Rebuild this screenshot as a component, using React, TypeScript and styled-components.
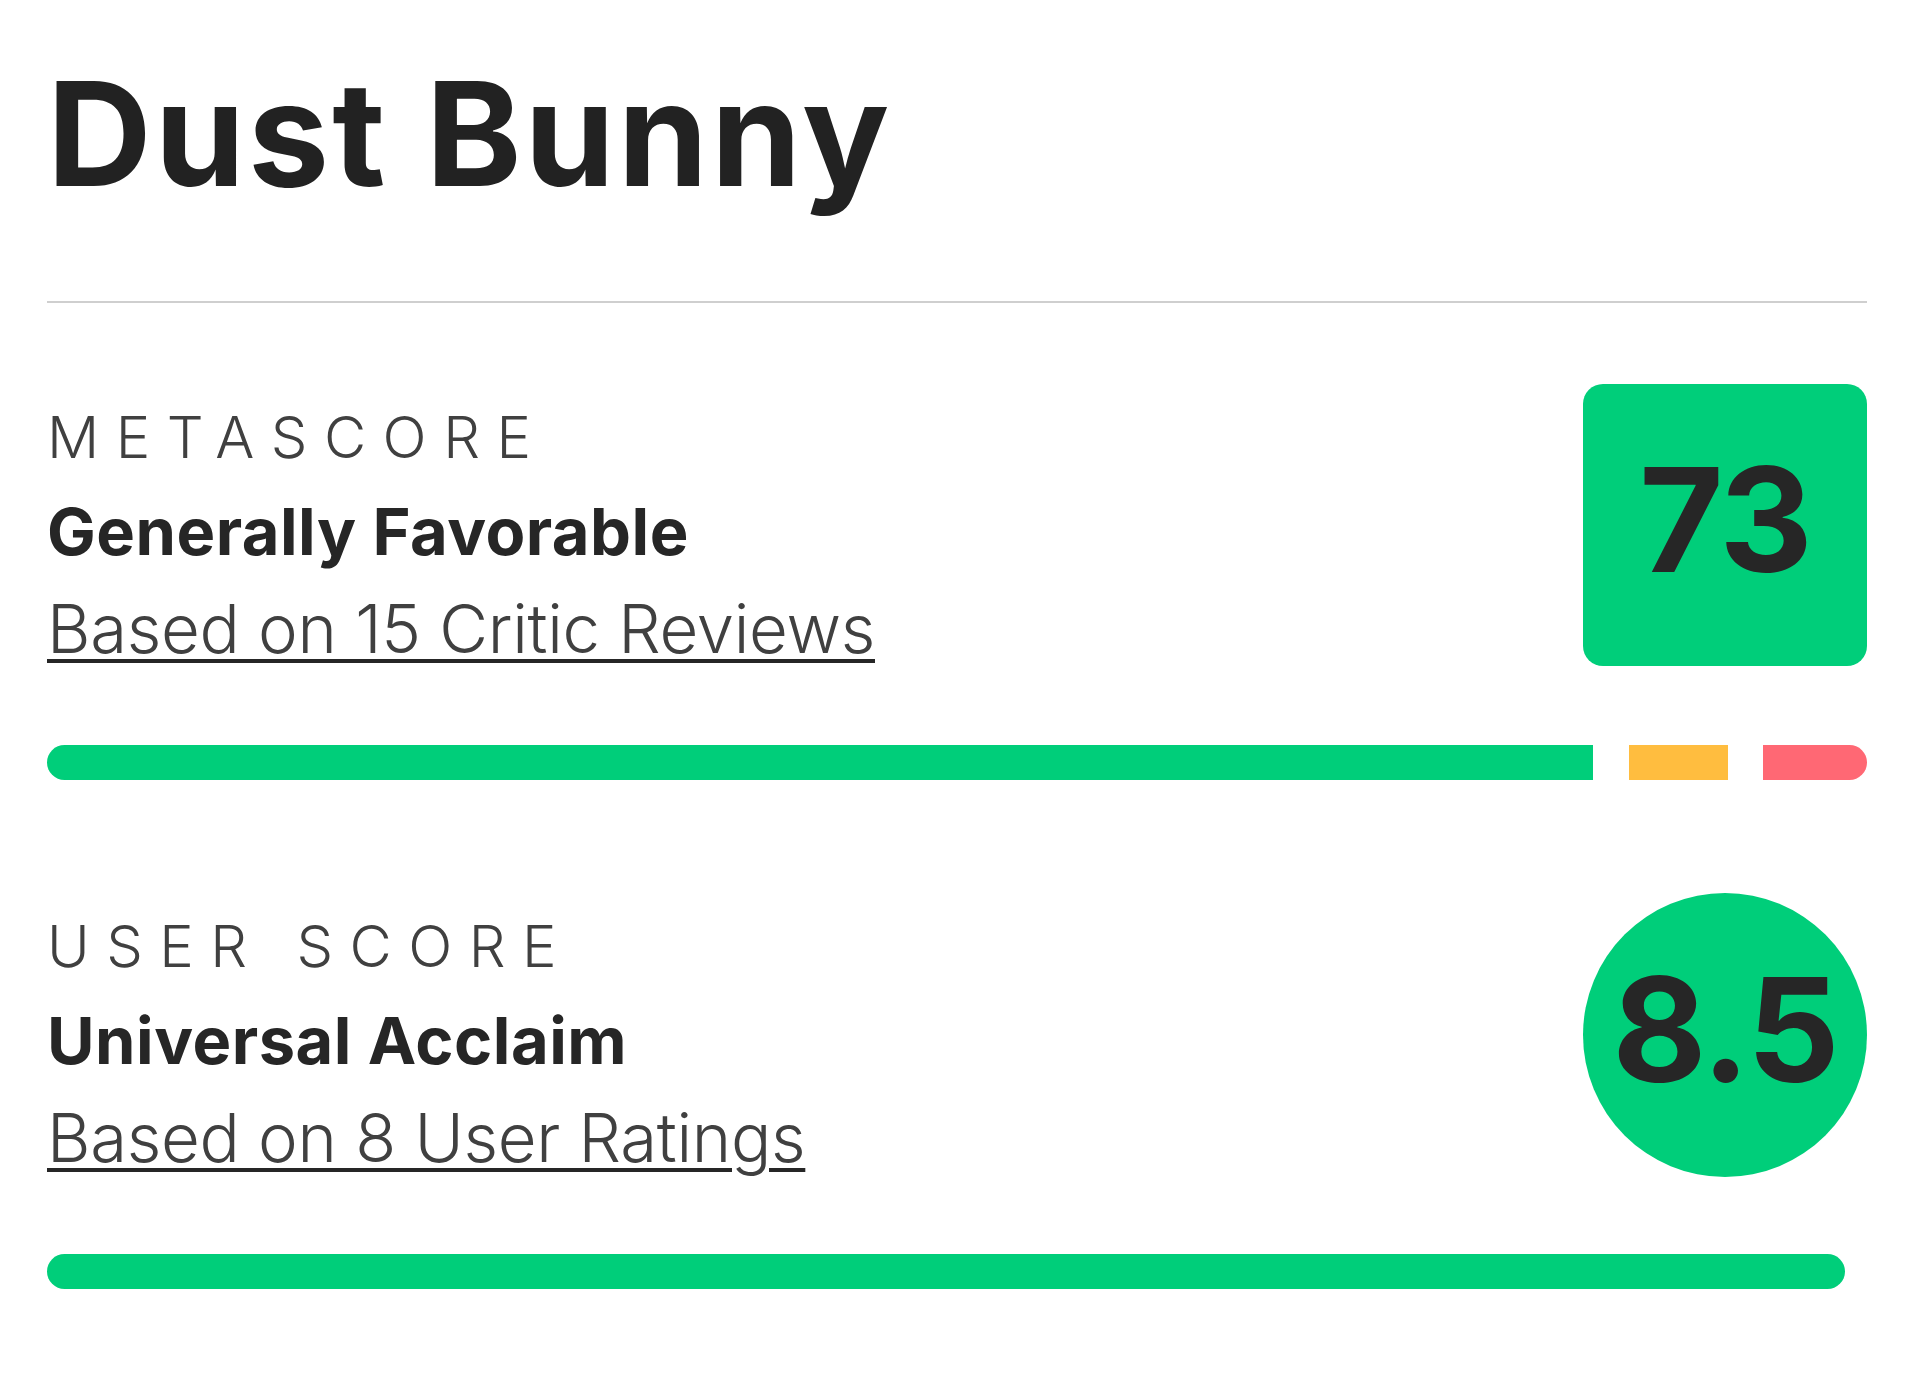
import React from 'react';
import styled, { createGlobalStyle } from 'styled-components';

const GlobalStyle = createGlobalStyle`
  html, body {
    margin: 0;
    padding: 0;
    background: #ffffff;
  }
  body {
    font-family: Inter, "Liberation Sans", sans-serif;
    color: #262626;
  }
`;

const Page = styled.div`
  padding: 47px 53px 80px 47px;
`;

const Title = styled.h1`
  margin: 0;
  font-size: 145px;
  line-height: 174px;
  font-weight: 700;
  letter-spacing: 3px;
  color: #222222;
`;

const Divider = styled.div`
  height: 2px;
  margin-top: 80px;
  background-color: #cfcfcf;
`;

const ScoreSection = styled.section<{ $top: number }>`
  margin-top: ${p => p.$top}px;
`;

const ScoreRow = styled.div`
  display: flex;
  justify-content: space-between;
  align-items: flex-start;
`;

const Info = styled.div`
  display: flex;
  flex-direction: column;
  padding-top: 18px;
`;

const Label = styled.div`
  font-size: 58px;
  line-height: 70px;
  font-weight: 300;
  letter-spacing: 16.5px;
  text-transform: uppercase;
  color: #404040;
  white-space: pre;
`;

const Verdict = styled.div`
  margin-top: 21px;
  font-size: 65px;
  line-height: 78px;
  font-weight: 700;
  letter-spacing: 0.5px;
  color: #262626;
`;

const CountLink = styled.a`
  margin-top: 18px;
  font-size: 67px;
  line-height: 80px;
  font-weight: 300;
  letter-spacing: -0.3px;
  color: #404040;
  text-decoration: underline;
  text-decoration-color: #262626;
  text-decoration-thickness: 4px;
  text-underline-offset: 6px;
  cursor: pointer;
  align-self: flex-start;
`;

const ScoreBadge = styled.div<{ $round?: boolean }>`
  width: 284px;
  height: ${p => (p.$round ? 284 : 282)}px;
  border-radius: ${p => (p.$round ? '50%' : '20px')};
  background-color: #00ce7a;
  display: flex;
  align-items: center;
  justify-content: center;
  box-sizing: border-box;
  padding-bottom: 12px;
  font-size: 145px;
  line-height: 1;
  font-weight: 700;
  letter-spacing: -2px;
  color: #262626;
  flex-shrink: 0;
`;

const Bar = styled.div<{ $trim?: number }>`
  display: flex;
  gap: 35.5px;
  height: 35px;
  margin-top: 76px;
  margin-right: ${p => p.$trim || 0}px;
`;

const Segment = styled.div<{ $color: string }>`
  height: 100%;
  background-color: ${p => p.$color};
  &:first-child {
    border-top-left-radius: 17.5px;
    border-bottom-left-radius: 17.5px;
  }
  &:last-child {
    border-top-right-radius: 17.5px;
    border-bottom-right-radius: 17.5px;
  }
`;

interface Part {
  weight: number;
  color: string;
}

interface Score {
  label: string;
  verdict: string;
  count: string;
  value: string;
  round?: boolean;
  parts: Part[];
  trim?: number;
  top: number;
}

const scores: Score[] = [
  {
    label: 'Metascore',
    verdict: 'Generally Favorable',
    count: 'Based on 15 Critic Reviews',
    value: '73',
    parts: [
      { weight: 1546, color: '#00ce7a' },
      { weight: 99, color: '#ffbd3f' },
      { weight: 104, color: '#ff6874' },
    ],
    top: 81,
  },
  {
    label: 'User Score',
    verdict: 'Universal Acclaim',
    count: 'Based on 8 User Ratings',
    value: '8.5',
    round: true,
    parts: [{ weight: 1, color: '#00ce7a' }],
    trim: 22,
    top: 113,
  },
];

const App: React.FC = () => {
  return (
    <>
      <GlobalStyle />
      <Page>
        <Title>Dust Bunny</Title>
        <Divider />
        {scores.map(score => (
          <ScoreSection key={score.label} $top={score.top}>
            <ScoreRow>
              <Info>
                <Label>{score.label}</Label>
                <Verdict>{score.verdict}</Verdict>
                <CountLink>{score.count}</CountLink>
              </Info>
              <ScoreBadge $round={score.round}>{score.value}</ScoreBadge>
            </ScoreRow>
            <Bar $trim={score.trim}>
              {score.parts.map((part, i) => (
                <Segment key={i} $color={part.color} style={{ flex: part.weight }} />
              ))}
            </Bar>
          </ScoreSection>
        ))}
      </Page>
    </>
  );
};

export default App;
